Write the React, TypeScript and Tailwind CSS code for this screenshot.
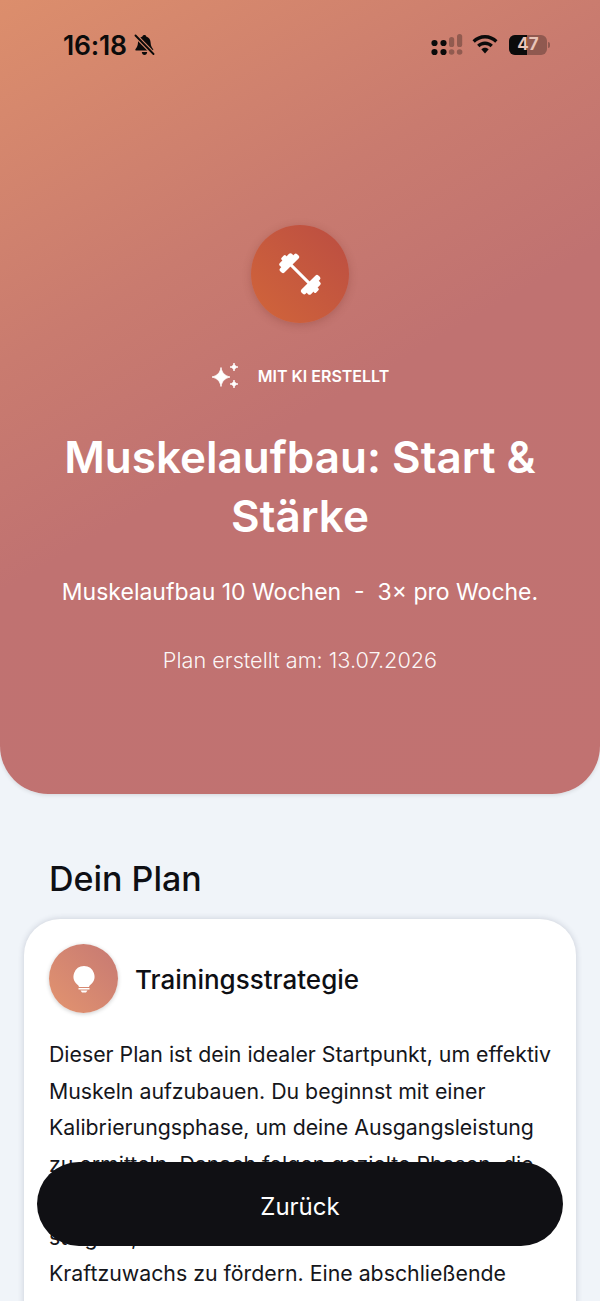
const strategyLines = [
  'Dieser Plan ist dein idealer Startpunkt, um effektiv',
  'Muskeln aufzubauen. Du beginnst mit einer',
  'Kalibrierungsphase, um deine Ausgangsleistung',
  'zu ermitteln. Danach folgen gezielte Phasen, die',
  'deine Muskelmasse aufbauen und',
  'steigern,',
  'Kraftzuwachs zu fördern. Eine abschließende',
]

function StatusBar() {
  return (
    <div className="flex items-center justify-between pt-[29px] pl-[63px] pr-[50px] h-[60px]">
      <div className="flex items-center gap-[7px]">
        <span className="text-[26.500px] leading-[30px] font-semibold text-[#0b0b0b] font-['Inter',sans-serif] tracking-[-0.2px]">16:18</span>
        <svg width="21" height="22" viewBox="0 0 21 22">
          <path fill="#0b0b0b" d="M10.500 1c1 0 1.700.7 1.700 1.600 2.900.8 4.300 3.200 4.400 6 .1 2.700.8 4.500 2.400 6.300.6.700.2 1.600-.7 1.600H2.300c-.9 0-1.300-.9-.7-1.600 1.600-1.800 2.300-3.600 2.400-6.300.1-2.800 1.500-5.200 4.400-6C8.400 1.700 9.500 1 10.500 1zM7.800 18h5.400c-.2 1.700-1.300 3-2.700 3s-2.500-1.300-2.700-3z" />
          <path d="M1.500 1.500 19.500 20" stroke="#d78a6c" strokeWidth="4.200" />
          <path d="M1.500 1.500 19.500 20" stroke="#0b0b0b" strokeWidth="1.900" strokeLinecap="round" />
        </svg>
      </div>
      <div className="flex items-center gap-[9px]">
        <svg width="32" height="22" viewBox="0 0 32 22">
          <circle cx="3.500" cy="9" r="3.100" fill="#0b0b0b" />
          <circle cx="12.500" cy="9" r="3.100" fill="#0b0b0b" />
          <circle cx="3.500" cy="18" r="3.100" fill="#0b0b0b" />
          <circle cx="12.500" cy="18" r="3.100" fill="#0b0b0b" />
          <rect x="18" y="3" width="5.200" height="10" rx="2.600" fill="#0b0b0b" opacity="0.3" />
          <rect x="26" y="0" width="5.200" height="13" rx="2.600" fill="#0b0b0b" opacity="0.3" />
          <circle cx="20.600" cy="18" r="2.800" fill="#0b0b0b" opacity="0.3" />
          <circle cx="28.600" cy="18" r="2.800" fill="#0b0b0b" opacity="0.3" />
        </svg>
        <svg width="26" height="20" viewBox="0 0 26 20" fill="#0b0b0b">
          <path d="M13 0c4.900 0 9.300 2 12.500 5.200l-2.300 2.500C20.600 5 17 3.400 13 3.400S5.400 5 2.800 7.700L.5 5.200C3.700 2 8.100 0 13 0z" />
          <path d="M13 6.400c3.100 0 5.900 1.300 7.900 3.300l-2.400 2.500c-1.400-1.400-3.400-2.300-5.500-2.300s-4.100.9-5.500 2.300L5.100 9.700c2-2 4.800-3.300 7.900-3.300z" />
          <path d="M13 12.700c1.500 0 2.800.6 3.700 1.500L13 18.500l-3.700-4.300c.9-.9 2.200-1.500 3.700-1.500z" />
        </svg>
        <div className="flex items-center ml-[2px]">
          <div className="relative w-[38px] h-[20px] rounded-[6px] overflow-hidden bg-[#0b0b0b]/30 flex items-center justify-center">
            <div className="absolute left-0 top-0 bottom-0 w-[18px] bg-[#0b0b0b]" />
            <span className="relative text-[17px] leading-none font-bold text-[#e9c4b8] font-['Inter',sans-serif]">47</span>
          </div>
          <div className="w-[2px] h-[6px] ml-[1px] rounded-r-full bg-[#0b0b0b]/30" />
        </div>
      </div>
    </div>
  )
}

export default function App() {
  return (
    <div className="relative w-[600px] h-[1301px] overflow-hidden bg-[#f0f4f9] font-['Inter',sans-serif]">
      <header className="h-[794px] rounded-b-[48px] bg-[linear-gradient(150deg,#dc8e6c_0%,#c97b6f_32%,#c07271_52%,#c17271_100%)] shadow-[0_1px_4px_rgba(0,0,0,0.12)]">
        <StatusBar />
        <div className="flex flex-col items-center pt-[165px]">
          <div className="w-[98px] h-[98px] rounded-full bg-[linear-gradient(45deg,#d1653a,#bb4d42)] shadow-[0_2px_8px_rgba(120,50,40,0.3)] flex items-center justify-center text-white">
            <svg width="48" height="48" viewBox="-24 -24 48 48" fill="white">
              <g transform="rotate(45)">
                <rect x="-15" y="-1.500" width="30" height="3" />
                <rect x="-18" y="-12" width="6" height="24" rx="2" />
                <rect x="12" y="-12" width="6" height="24" rx="2" />
                <rect x="-22" y="-8.500" width="6" height="17" rx="2" />
                <rect x="16" y="-8.500" width="6" height="17" rx="2" />
                <rect x="-24.500" y="-3" width="4" height="6" rx="1.500" />
                <rect x="20.500" y="-3" width="4" height="6" rx="1.500" />
              </g>
            </svg>
          </div>
          <div className="flex items-center gap-[18px] mt-[38px] h-[30px]">
            <svg width="29" height="28" viewBox="0 0 29 28" fill="white" stroke="white" strokeWidth="0.800" strokeLinejoin="round">
              <path d="M10 5.500C11 11 13.500 13.500 19 15 13.500 16.500 11 19 10 24.500 9 19 6.500 16.500 1 15 6.500 13.500 9 11 10 5.500z" />
              <path d="M23 1c.5 2.500 1.500 3.500 4 4-2.500.5-3.500 1.500-4 4-.5-2.500-1.500-3.500-4-4 2.500-.5 3.500-1.500 4-4z" />
              <path d="M23 18c.5 2.500 1.500 3.500 4 4-2.500.5-3.500 1.500-4 4-.5-2.500-1.500-3.500-4-4 2.500-.5 3.500-1.500 4-4z" />
            </svg>
            <span className="text-[16px] leading-[20px] font-semibold text-white">MIT KI ERSTELLT</span>
          </div>
          <h1 className="mt-[37px] w-[500px] text-center text-[44px] leading-[59px] font-semibold text-white">Muskelaufbau: Start &amp; Stärke</h1>
          <p className="mt-[30px] text-[23px] leading-[32px] text-white whitespace-pre">Muskelaufbau 10 Wochen  -  3× pro Woche.</p>
          <p className="mt-[38px] text-[21.700px] leading-[28px] font-light text-white/95">Plan erstellt am: 13.07.2026</p>
        </div>
      </header>

      <main className="px-[24px]">
        <h2 className="mt-[61px] pl-[25px] text-[34px] leading-[48px] font-medium text-[#0e0f14]">Dein Plan</h2>
        <section className="mt-[16px] rounded-t-[36px] bg-white pt-[25px] px-[25px] pb-[40px] shadow-[0_0_6px_rgba(40,50,80,0.2)]">
          <div className="flex items-center gap-[17px]">
            <div className="w-[69px] h-[69px] rounded-full bg-[linear-gradient(45deg,#e3946f,#c67973)] shadow-[0_1px_4px_rgba(0,0,0,0.2)] flex items-center justify-center">
              <svg width="24" height="28" viewBox="0 0 24 28" fill="white">
                <path d="M12 1a10.500 10.500 0 0 1 6.500 18.700c-.9.7-1.300 1.300-1.400 2.300H6.900c-.1-1-.5-1.600-1.400-2.300A10.500 10.500 0 0 1 12 1z" />
                <rect x="6.500" y="23" width="11" height="1.500" />
                <path d="M8.500 25.500h7L14 27.500h-4z" />
              </svg>
            </div>
            <h3 className="pt-[2px] text-[26px] leading-[36px] font-medium text-[#0e0f14]">Trainingsstrategie</h3>
          </div>
          <div className="mt-[23px] text-[21.300px] leading-[36.500px] text-[#15161b]">
            {strategyLines.map((line) => (
              <div key={line} className="whitespace-nowrap">{line}</div>
            ))}
          </div>
        </section>
      </main>

      <button className="absolute left-[37px] top-[1162px] w-[526px] h-[84px] pt-[6px] rounded-full bg-[#101014] text-white text-[24px] font-normal flex items-center justify-center">
        Zurück
      </button>
    </div>
  )
}
